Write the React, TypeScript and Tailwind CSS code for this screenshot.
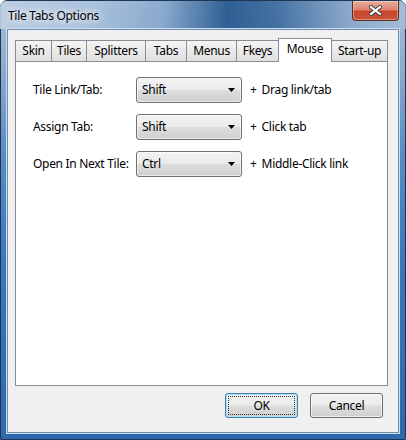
import React from 'react';

interface Tab {
  label: string;
  width: number;
}

const tabs: Tab[] = [
  { label: "Skin", width: 37 },
  { label: "Tiles", width: 36 },
  { label: "Splitters", width: 60 },
  { label: "Tabs", width: 42 },
  { label: "Menus", width: 51 },
  { label: "Fkeys", width: 43 },
  { label: "Mouse", width: 54 },
  { label: "Start-up", width: 57 },
];

const rows = [
  { label: "Tile Link/Tab:", key: "Shift", action: "Drag link/tab" },
  { label: "Assign Tab:", key: "Shift", action: "Click tab" },
  { label: "Open In Next Tile:", key: "Ctrl", action: "Middle-Click link" },
];

const btnFace = "bg-[linear-gradient(180deg,#f2f2f2_0%,#ebebeb_48%,#dddddd_52%,#cfcfcf_100%)]";

function CloseButton() {
  return (
    <div className="absolute right-[6px] top-0 w-[47px] h-[20px] rounded-b-[4px] border border-t-0 border-[#5e2a1f] bg-[linear-gradient(180deg,#e9ab9e_0%,#dd8470_45%,#c8452c_55%,#c9553a_100%)] flex items-center justify-center shadow-[inset_0_0_0_1px_rgba(255,255,255,0.35)]">
      <svg width="13" height="11" viewBox="0 0 13 11">
        <path d="M2 2 L11 9 M11 2 L2 9" stroke="#3a3a3a" strokeWidth="4" strokeLinecap="square" />
        <path d="M2 2 L11 9 M11 2 L2 9" stroke="#ffffff" strokeWidth="2.2" strokeLinecap="square" />
      </svg>
    </div>
  );
}

function Select({ value }: { value: string }) {
  return (
    <div className={`w-[106px] h-[26px] rounded-[3px] border border-[#707070] ${btnFace} flex items-center justify-between pl-[5px] pr-[6px] shadow-[inset_0_0_0_1px_rgba(255,255,255,0.6)]`}>
      <span>{value}</span>
      <svg width="7" height="4" viewBox="0 0 7 4">
        <path d="M0 0 H7 L3.5 4 Z" fill="#000" />
      </svg>
    </div>
  );
}

export default function App() {
  return (
    <div className="w-[406px] h-[440px] relative flex flex-col rounded-t-[7px] border border-[#1d3655] bg-[linear-gradient(180deg,#a9bed6_0%,#8eabcc_15%,#5a8cc2_35%,#3a77bb_60%,#2f69ab_100%)] text-[12px] tracking-[-0.3px] text-black [font-family:'Noto_Sans',sans-serif]">
      {/* Title bar */}
      <div className="h-[28px] shrink-0 rounded-t-[6px] -mx-px bg-[linear-gradient(90deg,rgba(190,208,228,0.9)_0%,rgba(172,196,222,0.8)_22%,rgba(120,160,200,0.6)_40%,rgba(35,85,140,0.9)_56%,rgba(45,95,150,0.8)_68%,rgba(140,170,205,0.7)_88%,rgba(165,188,214,0.8)_100%)] flex items-center pl-[8px] pt-[2px]">
        <span className="leading-none [text-shadow:0_0_6px_#fff,0_0_10px_#fff]">Tile Tabs Options</span>
        <CloseButton />
      </div>

      {/* Client area */}
      <div className="flex-1 mx-[6px] mb-[6px] bg-[#f0f0f0] border border-[#6f8fb2] shadow-[0_0_0_1px_#cddcee] flex flex-col pt-[7px] pl-[7px] pr-[10px]">
        {/* Tab strip */}
        <div className="flex items-end h-[24px]">
          {tabs.map((tab, i) => {
            const selected = tab.label === "Mouse";
            return (
              <div
                key={tab.label}
                style={{ width: tab.width }}
                className={`${i > 0 ? '-ml-px' : ''} border border-b-0 border-[#898c95] flex justify-center ${
                  selected
                    ? 'relative z-10 h-[24px] -mb-px bg-white pt-[1px]'
                    : `h-[21px] pt-[1px] bg-[linear-gradient(180deg,#f4f4f4_0%,#eaeaea_50%,#e0e0e0_100%)]`
                }`}
              >
                {tab.label}
              </div>
            );
          })}
        </div>

        {/* Panel */}
        <div className="h-[325px] bg-white border border-[#898c95] pt-[15px] pl-[17px] flex flex-col gap-[11px]">
          {rows.map((row) => (
            <div key={row.label} className="flex items-center h-[26px]">
              <span className="w-[103px]">{row.label}</span>
              <Select value={row.key} />
              <span className="ml-[8px]">+</span>
              <span className="ml-[5px]">{row.action}</span>
            </div>
          ))}
        </div>

        {/* Buttons */}
        <div className="flex justify-end gap-[12px] mt-[7px] pr-[5px]">
          <button className={`w-[73px] h-[25px] rounded-[3px] border border-[#3c7fb1] ${btnFace} p-[2px] shadow-[inset_0_0_0_1px_#b7e1fa]`}>
            <div className="w-full h-full border border-dotted border-[#333] flex items-center justify-center">OK</div>
          </button>
          <button className={`w-[73px] h-[25px] rounded-[3px] border border-[#707070] ${btnFace} shadow-[inset_0_0_0_1px_rgba(255,255,255,0.6)]`}>
            Cancel
          </button>
        </div>
      </div>
    </div>
  );
}
